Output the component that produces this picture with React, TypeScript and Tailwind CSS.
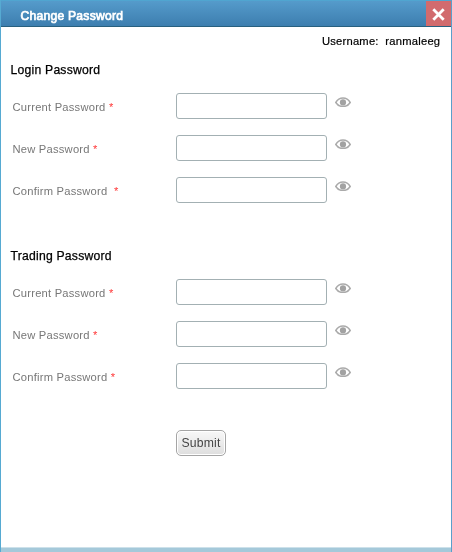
function EyeIcon() {
  return (
    <svg width="16" height="10" viewBox="0 0 16 10" className="mt-1 ml-2 shrink-0" aria-hidden="true">
      <path d="M.8 5.500C2.600 2.400 5 1.100 8 1.100S13.400 2.400 15.200 5.500C13.400 8.400 11 9.500 8 9.500S2.600 8.400.8 5.500Z" fill="#fff" stroke="#aaa" strokeWidth="1.500" />
      <circle cx="8" cy="5.400" r="3.100" fill="#a2a2a2" />
    </svg>
  );
}

function PasswordField({ label, wideGap = false }: { label: string; wideGap?: boolean }) {
  return (
    <label className="flex h-[42px] items-start text-[11.200px] text-[#777]">
      <span className="w-[164px] shrink-0 pt-[6px] pl-[0.5px] leading-4 tracking-[0.220px] whitespace-pre">
        {label}
        {wideGap ? "  " : " "}
        <span className="text-[#ff3b3b]">*</span>
      </span>
      <input type="password" className="h-[26px] w-[151px] rounded-[3px] border border-[#a3b0b3] bg-white outline-none" />
      <EyeIcon />
    </label>
  );
}

function PasswordSection({ title, wideConfirm = false }: { title: string; wideConfirm?: boolean }) {
  return (
    <section className="h-[186px]">
      <h2 className="mb-[15px] pl-[9.500px] text-[12.200px] leading-4 tracking-[0.220px] text-black [-webkit-text-stroke:0.25px_#000]">{title}</h2>
      <div className="pl-[11px]">
        <PasswordField label="Current Password" />
        <PasswordField label="New Password" />
        <PasswordField label="Confirm Password" wideGap={wideConfirm} />
      </div>
    </section>
  );
}

export default function App() {
  return (
    <div className="flex h-[552px] w-[452px] flex-col border-x border-l-[#56aad2] border-r-[#5a9fcb] bg-white font-['Liberation_Sans',Arial,sans-serif] will-change-transform">
      <header className="flex h-[27px] shrink-0 items-start justify-between border-t border-b border-t-[#50a5d0] border-b-[#28607f] bg-linear-to-b from-[#559bcb] to-[#3d7eaf]">
        <h1 className="pt-[7px] pl-[19.500px] text-[12.100px] leading-4 tracking-[0.260px] text-white [-webkit-text-stroke:0.7px_#fff]">Change Password</h1>
        <button aria-label="Close" className="flex h-[25px] w-[25px] items-center justify-center bg-[#d26b6e]">
          <svg width="13" height="13" viewBox="0 0 12 12" className="mt-[2px] mr-[1px]" aria-hidden="true">
            <path d="M1.200 1.200 10.800 10.800M10.800 1.200 1.200 10.800" stroke="#fff" strokeWidth="2.600" />
          </svg>
        </button>
      </header>
      <main className="flex-1">
        <p className="mb-[13px] pt-[6px] pr-[10.700px] text-right text-[11.200px] leading-4 tracking-[0.230px] whitespace-pre text-black [-webkit-text-stroke:0.2px_#000]">{"Username:  ranmaleeg"}</p>
        <PasswordSection title="Login Password" wideConfirm />
        <PasswordSection title="Trading Password" />
        <button className="mt-[-4px] ml-[175px] block h-[26px] w-[50px] rounded-[5px] border border-[#a5a5a5] bg-linear-to-b from-[#f8f8f8] to-[#dedede] text-[12.200px] tracking-[0.200px] text-[#444] shadow-[inset_0_0_0_1px_#fff]">Submit</button>
      </main>
      <footer className="h-[5px] border-t border-[#cde1ea] bg-[#a5c9da]" />
    </div>
  );
}
